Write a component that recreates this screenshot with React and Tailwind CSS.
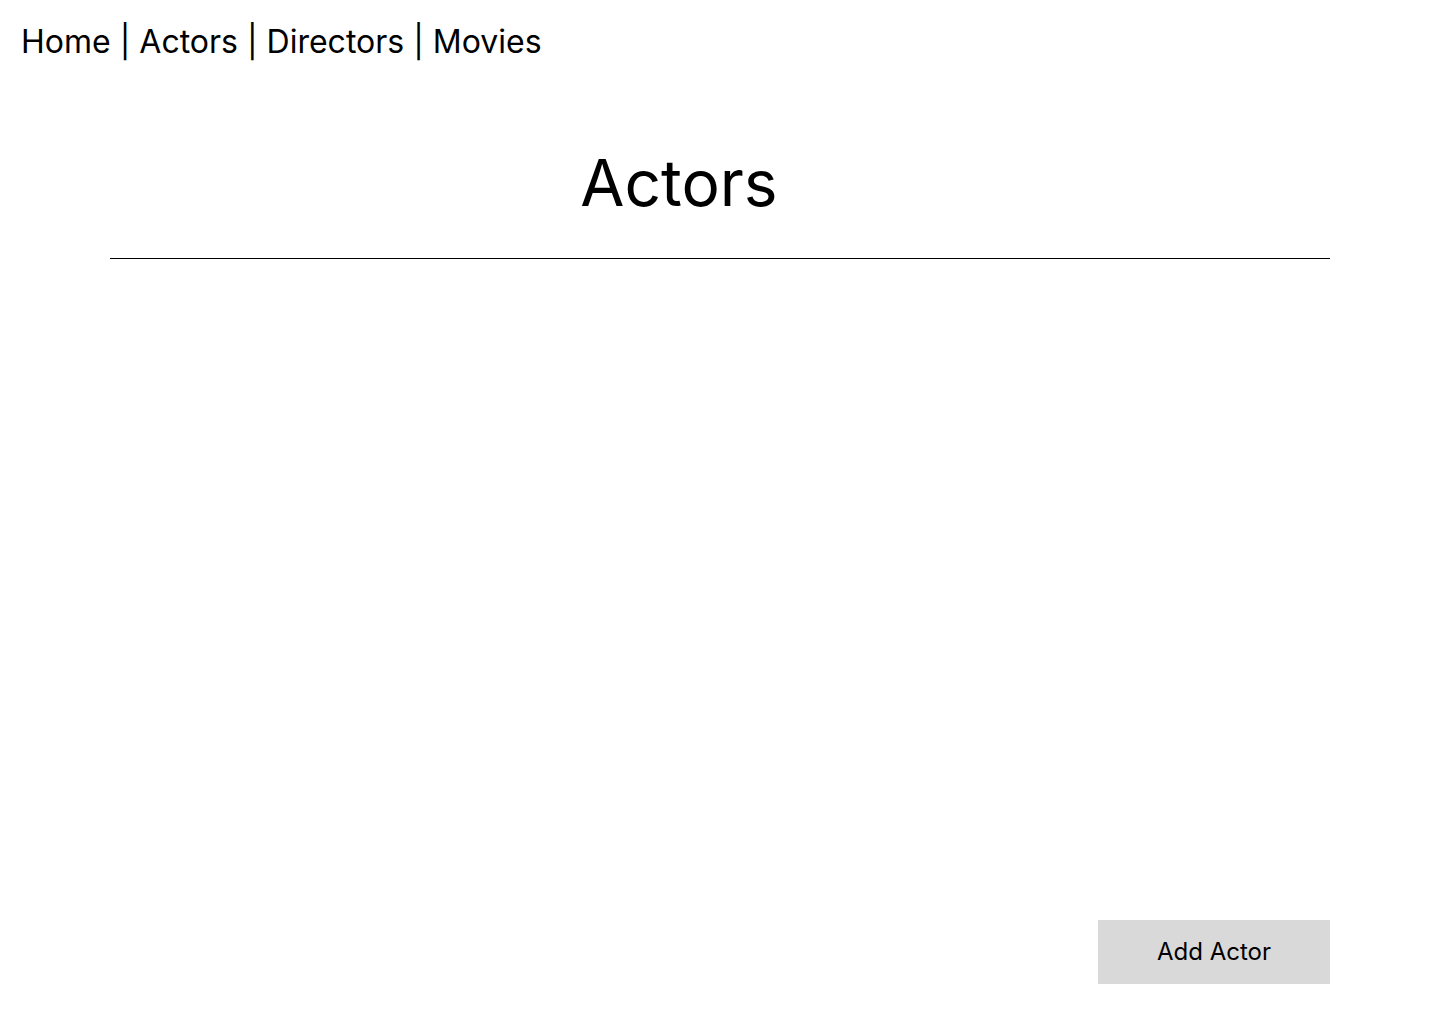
export default function App() {
  const links = ['Home', 'Actors', 'Directors', 'Movies'];

  return (
    <div
      className="flex min-h-screen flex-col bg-white text-black"
      style={{ fontFamily: 'Inter, "Noto Sans", sans-serif' }}
    >
      {/* Top navigation */}
      <nav className="flex pl-[21px] pt-[22px] text-[32px] leading-[39px]">
        {links.map((link, i) => (
          <span key={link} className="whitespace-pre">
            {i > 0 && ' | '}
            <a href="#">{link}</a>
          </span>
        ))}
      </nav>

      {/* Page title */}
      <h1 className="mt-[83px] pr-[82px] text-center text-[64px] font-normal leading-[78px]">
        Actors
      </h1>

      <div className="mx-[110px] mt-[36px] border-t border-black" />

      <div className="flex-1" />

      {/* Actions */}
      <div className="flex justify-end px-[110px] pb-[40px]">
        <button className="h-[64px] w-[232px] bg-[#d9d9d9] pb-[2px] text-[24px] leading-[29px]">
          Add Actor
        </button>
      </div>
    </div>
  );
}
